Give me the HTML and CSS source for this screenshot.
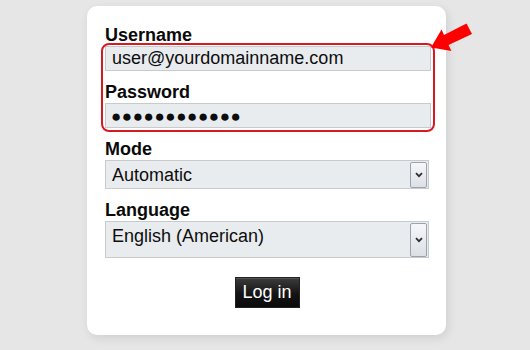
FILE: index.html
```html
<!DOCTYPE html>
<html lang="en">
<head>
<meta charset="utf-8">
<title>Log in</title>
<link rel="stylesheet" href="styles.css">
</head>
<body>
<main class="card">
  <form class="login-form">
    <div class="field">
      <label class="field-label" for="username">Username</label>
      <input class="text-input" id="username" type="text" value="user@yourdomainname.com">
    </div>
    <div class="field">
      <label class="field-label" for="password">Password</label>
      <input class="text-input password-input" id="password" type="text" value="●●●●●●●●●●●●" readonly>
    </div>
    <div class="field">
      <span class="field-label">Mode</span>
      <div class="select">
        <span class="select-value">Automatic</span>
        <span class="select-btn"><svg width="8" height="6" viewBox="0 0 8 6"><path d="M1 1.2 L4 4.2 L7 1.2" fill="none" stroke="#2b2f36" stroke-width="1.8"/></svg></span>
      </div>
    </div>
    <div class="field">
      <span class="field-label">Language</span>
      <div class="select select-tall">
        <span class="select-value">English (American)</span>
        <span class="select-btn"><svg width="8" height="6" viewBox="0 0 8 6"><path d="M1 1.2 L4 4.2 L7 1.2" fill="none" stroke="#2b2f36" stroke-width="1.8"/></svg></span>
      </div>
    </div>
    <div class="actions">
      <button class="login-btn" type="button">Log in</button>
    </div>
  </form>
  <div class="highlight"></div>
  <svg class="pointer-arrow" width="46" height="32" viewBox="430 22 46 32">
    <polygon points="431,47.5 441.5,29.5 444,35 466.5,23.5 472,34 448.5,45 451.5,51" fill="#ff0000"/>
  </svg>
</main>
</body>
</html>
```

FILE: styles.css
```css
* { box-sizing: border-box; }

html, body {
  margin: 0;
  padding: 0;
}

body {
  width: 530px;
  height: 350px;
  background: #e6e6e6;
  font-family: "Liberation Sans", Arial, sans-serif;
  color: #111;
  overflow: hidden;
}

.card {
  position: relative;
  margin: 6px 0 0 87px;
  width: 359px;
  padding: 18px 17px 27px 18px;
  background: #fff;
  border-radius: 10px;
  box-shadow: 2px 3px 10px rgba(0, 0, 0, 0.10);
}

.login-form {
  display: flex;
  flex-direction: column;
  gap: 10px;
  margin: 0;
}

.field {
  display: flex;
  flex-direction: column;
}

.field-label {
  display: block;
  font-size: 18px;
  font-weight: bold;
  line-height: 21px;
  padding-top: 1px;
  color: #0a0a0a;
}

.text-input {
  display: block;
  width: 326px;
  height: 25px;
  margin: 0;
  padding: 0 6px;
  border: 1px solid #c8cacb;
  border-radius: 0;
  background: #e9ecee;
  font-family: "Liberation Sans", Arial, sans-serif;
  font-size: 18px;
  color: #0d0d0d;
  outline: none;
}

.password-input {
  font-size: 17px;
  letter-spacing: 0.6px;
  padding-top: 2px;
  padding-left: 5px;
}

.select {
  display: flex;
  align-items: flex-start;
  width: 324px;
  height: 29px;
  padding: 4px 1px 0 6px;
  border: 1px solid #c8cacb;
  background: #e9ecee;
  font-size: 18px;
  line-height: 21px;
}

.select-tall {
  height: 37px;
}

.select-value {
  flex: 1;
  color: #0d0d0d;
}

.select-btn {
  align-self: stretch;
  margin: -3px 0 0 0;
  width: 17px;
  display: flex;
  align-items: center;
  justify-content: center;
  border: 1px solid #9aa3b0;
  border-radius: 2px;
  background: linear-gradient(#f6f7f9, #dcdfe5);
}

.actions {
  display: flex;
  justify-content: center;
  margin-top: 9px;
}

.login-btn {
  width: 65px;
  height: 31px;
  padding: 0;
  border: 1px solid #222;
  background: linear-gradient(#3c3c3c, #141414 55%, #0a0a0a);
  box-shadow: inset 0 1px 0 rgba(255, 255, 255, 0.12);
  color: #fff;
  font-family: "Liberation Sans", Arial, sans-serif;
  font-size: 18px;
  line-height: 29px;
  cursor: pointer;
}

.highlight {
  position: absolute;
  top: 37px;
  left: 14px;
  width: 334px;
  height: 89px;
  border: 2px solid #d71a22;
  border-radius: 8px;
  pointer-events: none;
}

.pointer-arrow {
  position: absolute;
  left: 343px;
  top: 16px;
}
```
